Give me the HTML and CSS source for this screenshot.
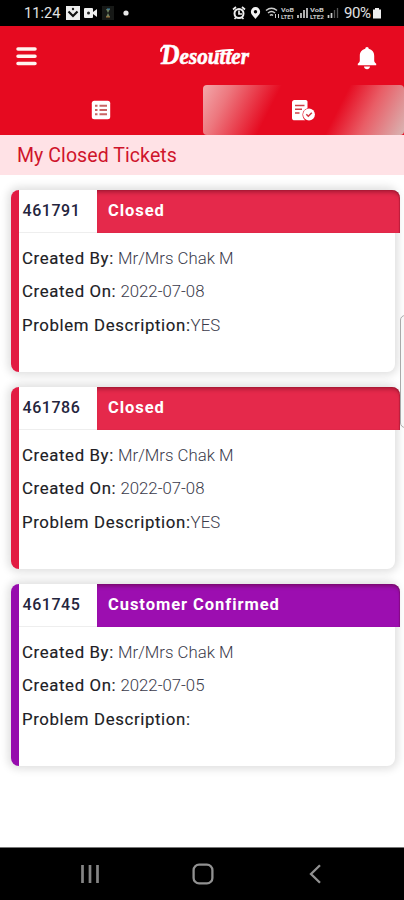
FILE: index.html
```
<!DOCTYPE html>
<html lang="en">
<head>
<meta charset="utf-8">
<title>My Closed Tickets</title>
<link rel="stylesheet" href="styles.css">
</head>
<body>
<div class="screen">
  <div class="status">
    <span class="clock">11:24</span>
    <svg class="status-left" width="68" height="26" viewBox="0 0 68 26">
      <rect x="1" y="6" width="14" height="14" fill="#eee"/>
      <path d="M3.500 11.500l4.500 4.500 4.500-4.500" fill="none" stroke="#111" stroke-width="2.200"/><circle cx="8" cy="9" r="1.200" fill="#222"/>
      <rect x="19" y="8" width="9" height="10" rx="1" fill="#eee"/><path d="M28 12l4-3v8l-4-3z" fill="#eee"/><circle cx="23.500" cy="13" r="1.500" fill="#222"/>
      <rect x="37" y="6" width="12" height="14" fill="#171917"/><path d="M41 9h4l-2 4 2 4h-4l2-4z" fill="#6c8060"/><path d="M42 9h3" stroke="#387da5"/><path d="M41 17h4" stroke="#a57136"/>
      <circle cx="61" cy="13" r="2.600" fill="#e8e8e8"/>
    </svg>
    <svg class="status-right" width="108" height="26" viewBox="0 0 108 26">
      <circle cx="7" cy="13.500" r="4.500" fill="none" stroke="#eee" stroke-width="2"/><path d="M7 10.500v3.500h3M1 9.500L4 7M13 9.500L10 7M2.500 19l2-2M11.500 19l-2-2" fill="none" stroke="#eee" stroke-width="1.700"/>
      <path d="M23.500 7a4.600 4.600 0 0 1 4.600 4.700c0 2.800-2.600 4.300-4.600 7.300-2-3-4.600-4.500-4.600-7.300A4.600 4.600 0 0 1 23.500 7z" fill="#f2f2f2"/><circle cx="23.500" cy="11.800" r="1.700" fill="#000"/>
      <path d="M34 10.500q5.500-4.500 11 0M36 13q3.500-3 7 0M38 15.500q1.500-1.500 3 0" fill="none" stroke="#ccc" stroke-width="1.500"/><path d="M43.500 14v4M46.500 14v4" stroke="#ccc"/>
      <g fill="#c8c8c8" font-family="Roboto, sans-serif" font-size="6" font-weight="700">
        <text x="49" y="12" textLength="13" lengthAdjust="spacingAndGlyphs">VoB</text><text x="49" y="19" textLength="13" lengthAdjust="spacingAndGlyphs">LTE1</text>
        <text x="78" y="12" textLength="14" lengthAdjust="spacingAndGlyphs">VoB</text><text x="78" y="19" textLength="14" lengthAdjust="spacingAndGlyphs">LTE2</text>
      </g>
      <path d="M66 18v-3M69 18v-5M72 18V10M75 18V8M96.500 18v-3M99.500 18v-5" stroke="#ccc" stroke-width="1.700"/><path d="M102.500 18V10M105.500 18V8" stroke="#555" stroke-width="1.300"/>
    </svg>
    <span class="percent">90%</span>
    <svg class="battery" width="10" height="26" viewBox="0 0 10 26"><path d="M3 8h4v1.500h2V18.500H1V9.500h2z" fill="#eee"/></svg>
  </div>
  <header class="header">
    <svg class="menu" width="21" height="20" viewBox="0 0 21 20"><path d="M2 3h17M2 10.200h17M2 17.400h17" stroke="#fff4ef" stroke-width="3.500" stroke-linecap="round"/></svg>
    <svg class="logo" width="102" height="46" viewBox="0 -6 102 46">
      <text class="logo-text" x="3" y="26" textLength="88" lengthAdjust="spacingAndGlyphs"><tspan class="initial">D</tspan>esoutter</text>
      <path d="M3 13q0-5 6-4M58 13.500q8-2 17-1.500" fill="none" stroke="#fff" stroke-width="2" stroke-linecap="round"/>
    </svg>
    <svg class="bell" width="22" height="24" viewBox="0 0 22 24"><path d="M11 1c1.100 0 1.700.7 1.700 1.800 3.500.8 5.500 3.400 5.500 7.200v4.500c0 1.500.8 2.300 2 3.200v1.500H1.800v-1.500c1.200-.9 2-1.700 2-3.200V10c0-3.800 2-6.400 5.500-7.200C9.300 1.700 9.900 1 11 1z" fill="#fff"/><path d="M8 20.500h6c-.3 1.700-1.300 2.700-3 2.700s-2.700-1-3-2.700z" fill="#fff"/></svg>
  </header>
  <nav class="tabs">
    <div class="tab">
      <svg width="20" height="20" viewBox="0 0 20 20"><rect x=".8" y=".8" width="18.400" height="18.400" rx="2.500" fill="#fff"/><path d="M4 5.800h2.500M4 10h2.500M4 14.200h2.500M8.500 5.800H16M8.500 10H16M8.500 14.200H16" stroke="#c96464" stroke-width="2"/></svg>
    </div>
    <div class="tab active">
      <svg width="25" height="23" viewBox="0 0 25 23"><path d="M3.500 1h11.200c1 0 1.800.8 1.800 1.800v6.400a7 7 0 0 0-5 6.300c0 2.300 1 4.500 2.800 5.800H3.500C2 21.300 1 20.500 1 19V3.500C1 2 2 1 3.500 1z" fill="#fff"/><path d="M4 6.500h9.500M4 10.300h7M4 14.100h4.500" stroke="#cf4048" stroke-width="1.500"/><circle cx="18" cy="15.500" r="5.900" fill="#fff"/><path d="M15.300 15.300l2 2 3.500-3.600" fill="none" stroke="#cf3540" stroke-width="1.500"/></svg>
    </div>
  </nav>
  <h1 class="title">My Closed Tickets</h1>
  <main class="list">
    <article class="card closed">
      <div class="card-head"><span class="number">461791</span><span class="state">Closed</span></div>
      <div class="details">
        <p><b>Created By:</b> Mr/Mrs Chak M</p>
        <p><b>Created On:</b> 2022-07-08</p>
        <p><b>Problem Description:</b>YES</p>
      </div>
    </article>
    <article class="card closed">
      <div class="card-head"><span class="number">461786</span><span class="state">Closed</span></div>
      <div class="details">
        <p><b>Created By:</b> Mr/Mrs Chak M</p>
        <p><b>Created On:</b> 2022-07-08</p>
        <p><b>Problem Description:</b>YES</p>
      </div>
    </article>
    <article class="card confirmed">
      <div class="card-head"><span class="number">461745</span><span class="state">Customer Confirmed</span></div>
      <div class="details">
        <p><b>Created By:</b> Mr/Mrs Chak M</p>
        <p><b>Created On:</b> 2022-07-05</p>
        <p><b>Problem Description:</b></p>
      </div>
    </article>
  </main>
  <footer class="navbar">
    <svg width="20" height="20" viewBox="0 0 20 20"><path d="M2.500 1v18M10 1v18M17.500 1v18" stroke="#858585" stroke-width="2.700"/></svg>
    <svg width="22" height="22" viewBox="0 0 22 22"><rect x="1.600" y="1.600" width="18.800" height="18.800" rx="5.500" fill="none" stroke="#919191" stroke-width="2.300"/></svg>
    <svg width="14" height="20" viewBox="0 0 14 20"><path d="M12 1.200L3 10l9 8.800" fill="none" stroke="#919191" stroke-width="2.300"/></svg>
  </footer>
  <div class="edge-handle"></div>
</div>
</body>
</html>
```
FILE: styles.css
```
* { box-sizing: border-box; }
body { margin: 0; background: #fff; font-family: Roboto, sans-serif; }
svg { display: block; flex: none; }
.screen { position: relative; display: flex; flex-direction: column; width: 404px; height: 900px; overflow: hidden; background: #fff; }
.status { display: flex; align-items: center; height: 26px; flex: none; background: #000; color: #e2e2e2; padding-left: 24px; }
.clock { width: 41px; font-size: 14.5px; letter-spacing: .1px; }
.status-right { margin-left: 99px; }
.percent { width: 28px; margin-left: 4px; font-size: 15px; letter-spacing: -.4px; white-space: nowrap; }
.header { display: flex; align-items: center; height: 59px; flex: none; padding: 1px 26px 0 16px; background: #e60a20; }
.logo { margin-left: 121px; margin-bottom: 2px; }
.logo-text { fill: #fff; stroke: #fff; stroke-width: .6; font-family: "Liberation Serif", serif; font-size: 24px; font-style: italic; font-weight: 700; }
.initial { font-size: 29px; }
.bell { margin: 3px 0 0 auto; }
.tabs { display: grid; grid-template-columns: 1fr 1fr; height: 50px; flex: none; background: #e60a20; }
.tab { display: flex; align-items: center; justify-content: center; }
.active { margin-left: 1px; border-radius: 4px; background: linear-gradient(117deg, #f2a9ac 0%, #ed777e 13%, #e60a20 35%, #e60a20 65%, #e95d66 80%, #d9b6b4 100%); }
.title { flex: none; margin: 0; height: 40px; padding-left: 17px; background: #ffe2e6; color: #cf142b; font-size: 19.5px; line-height: 41px; font-weight: 400; letter-spacing: .08px; }
.list { display: flex; flex-direction: column; gap: 15px; flex: 1; padding: 15px 9px 0 11px; }
.card { width: 384px; height: 182px; flex: none; border-left: 8px solid; border-radius: 8px; background: #fff; box-shadow: 0 0 9px 3px rgba(0,0,0,.13); }
.closed { border-color: #e21c43; }
.confirmed { border-color: #960cad; }
.card-head { display: grid; grid-template-columns: 78px 303px; width: 381px; height: 43px; font-size: 16.5px; line-height: 41px; font-weight: 700; }
.number { padding-left: 3.500px; border-bottom: 1px solid #eee; color: #25253d; font-size: 16px; font-weight: 500; letter-spacing: .55px; }
.state { padding-left: 11px; border-radius: 0 8px 0 0; color: #fff; letter-spacing: .95px; box-shadow: inset 0 5px 4px -3px rgba(75,0,20,.45), inset -1px 0 1px rgba(75,0,20,.25); }
.closed .state { background: #e5294b; }
.confirmed .state { background: #9c0eb0; }
.details { padding: 8.600px 0 0 3px; color: #3b3b4b; font-size: 16.8px; line-height: 33.700px; font-weight: 300; }
.details p { margin: 0; }
.details b { color: #202024; font-weight: 400; letter-spacing: .63px; -webkit-text-stroke: .15px #202024; }
.navbar { display: grid; grid-template-columns: 102px 22px 102px; justify-content: center; align-items: center; justify-items: center; height: 53px; flex: none; padding-left: 1px; border-top: 1px solid #777; background: #000; }
.navbar svg:first-child { justify-self: start; margin-left: -10px; }
.navbar svg:last-child { justify-self: end; margin-right: -6px; }
.edge-handle { position: absolute; right: -8px; top: 315px; width: 12px; height: 113px; border: 1px solid #aaa; border-radius: 5px; background: #f8f8f8; }
```
